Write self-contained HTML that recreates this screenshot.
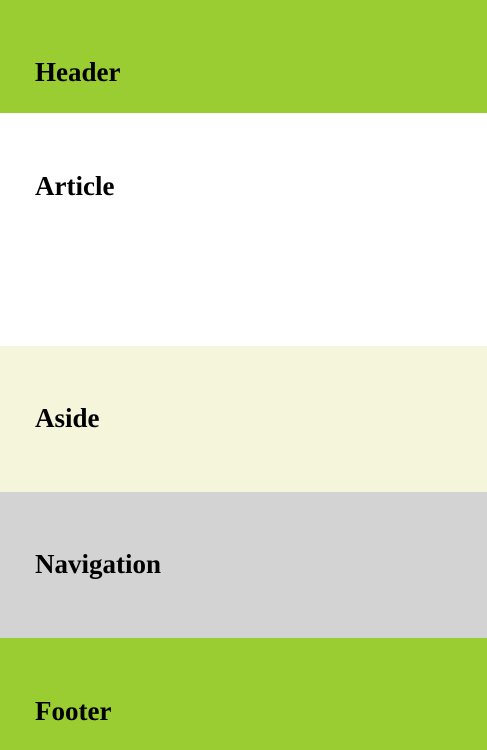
<!DOCTYPE html>
<html><head><style>
html,body{margin:0;padding:0;width:487px;height:750px;overflow:hidden;font-family:"Liberation Serif",serif;}
.s{position:absolute;left:0;width:487px;}
.t{position:absolute;left:35px;font-weight:bold;font-size:27px;line-height:30px;color:#000;}
</style></head><body>
<div class="s" style="top:0;height:113px;background:#9acd32"></div>
<div class="s" style="top:113px;height:233px;background:#fff"></div>
<div class="s" style="top:346px;height:146px;background:#f5f5dc"></div>
<div class="s" style="top:492px;height:146px;background:#d3d3d3"></div>
<div class="s" style="top:638px;height:112px;background:#9acd32"></div>
<div class="t" style="top:57px">Header</div>
<div class="t" style="top:171px">Article</div>
<div class="t" style="top:403px">Aside</div>
<div class="t" style="top:549px">Navigation</div>
<div class="t" style="top:696px">Footer</div>
</body></html>
